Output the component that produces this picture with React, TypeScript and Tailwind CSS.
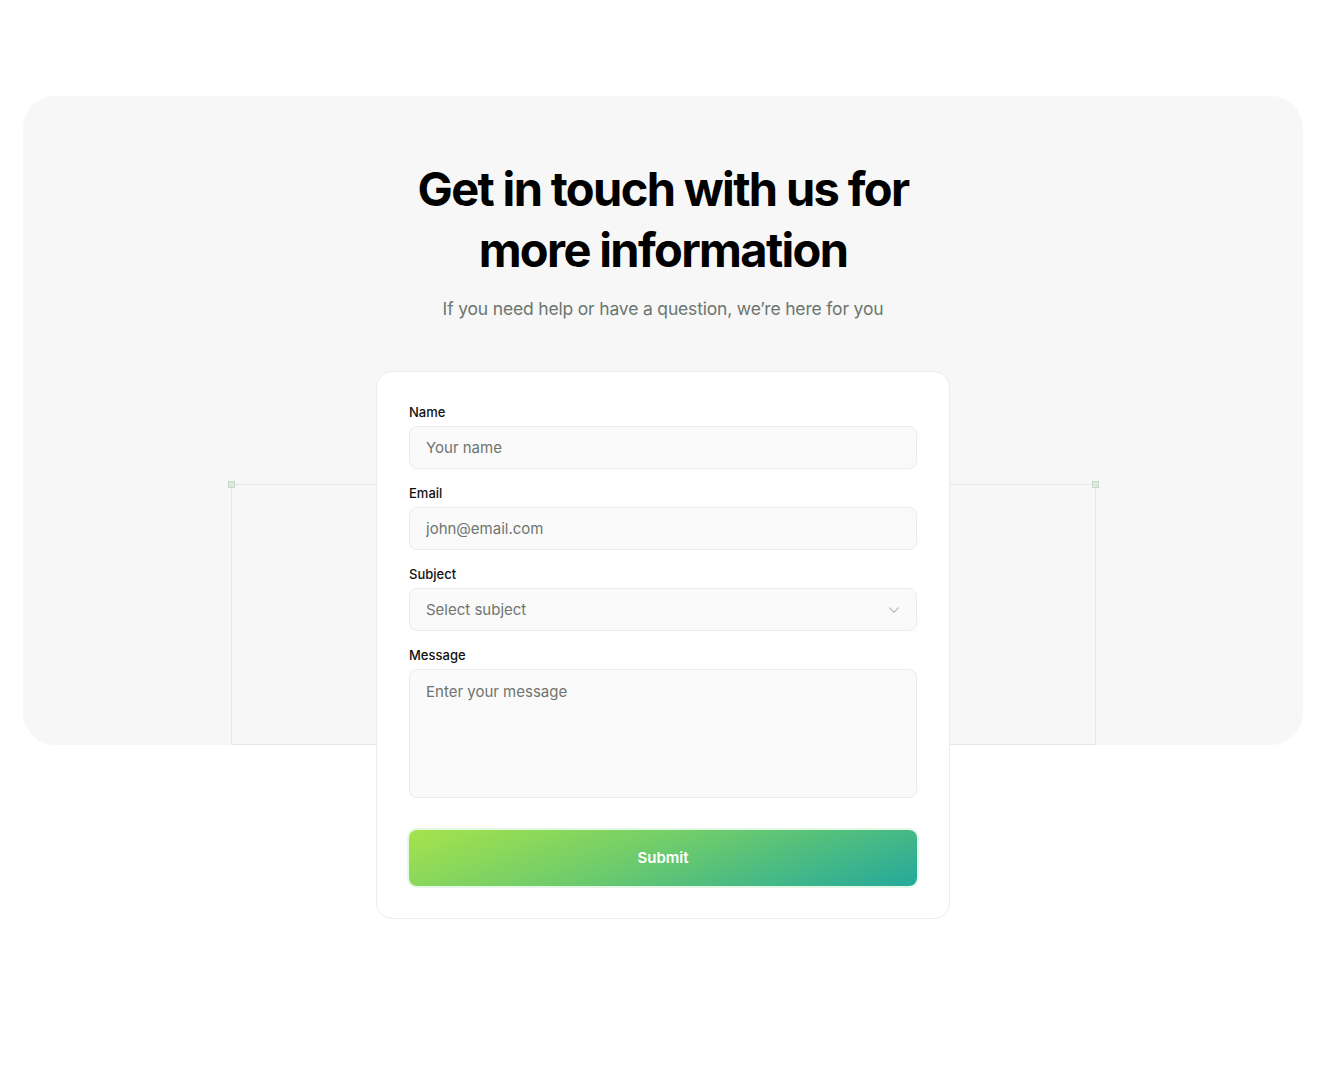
import { ChevronDown } from 'lucide-react';

const font = { fontFamily: 'Inter, "Noto Sans", sans-serif' };

function Field({ label, children }: { label: string; children: React.ReactNode }) {
  return (
    <div className="flex flex-col">
      <label className="text-[13px] font-medium text-[#111] leading-4 mb-[6px]">{label}</label>
      {children}
    </div>
  );
}

const boxCls = 'h-[43px] w-full rounded-lg border border-[#ebebeb] bg-[#fafafa] px-4 text-[15px] outline-none';
const inputCls = boxCls + ' text-[#111] placeholder:text-[#6f7470]';

export default function App() {
  return (
    <div className="min-h-screen bg-white px-[23px] pt-[96px]" style={font}>
      <div className="relative rounded-[32px] bg-[#f7f7f7] pt-[62px]">
        {/* decorative frame behind the form */}
        <div className="absolute left-[208px] right-[207px] top-[388px] bottom-0 border border-[#e6e8e6]">
          <span className="absolute -left-[4px] -top-[4px] h-[7px] w-[7px] border border-[#c5dccb] bg-[#dbeadf]" />
          <span className="absolute -right-[4px] -top-[4px] h-[7px] w-[7px] border border-[#c5dccb] bg-[#dbeadf]" />
        </div>

        <div className="relative flex flex-col items-center">
          <h1 className="text-center text-[47px] font-bold leading-[61px] tracking-[-0.035em] text-black">
            Get in touch with us for
            <br />
            more information
          </h1>
          <p className="mt-[16px] text-[17.5px] text-[#6b766f] tracking-[-0.01em]">
            If you need help or have a question, we’re here for you
          </p>

          <form
            className="mt-[49px] -mb-[174px] flex w-[574px] flex-col rounded-2xl border border-[#ececec] bg-white p-8"
            onSubmit={(e) => e.preventDefault()}
          >
            <div className="flex flex-col gap-[16px]">
              <Field label="Name">
                <input className={inputCls} placeholder="Your name" />
              </Field>
              <Field label="Email">
                <input className={inputCls} placeholder="john@email.com" />
              </Field>
              <Field label="Subject">
                <div className="relative">
                  <div className={boxCls + ' flex items-center text-[#6f7470]'}>Select subject</div>
                  <ChevronDown
                    className="absolute right-[14px] top-1/2 h-[18px] w-[18px] -translate-y-1/2 text-[#a3a8a5]"
                    strokeWidth={1.4}
                  />
                </div>
              </Field>
              <Field label="Message">
                <textarea
                  className="h-[129px] w-full resize-none rounded-lg border border-[#ebebeb] bg-[#fafafa] px-4 py-[11px] text-[15px] text-[#111] placeholder:text-[#6f7470] outline-none"
                  placeholder="Enter your message"
                />
              </Field>
            </div>
            <button
              type="submit"
              className="mt-8 h-[56px] w-full rounded-lg bg-[linear-gradient(160deg,#a6e34b_0%,#6fcc6b_45%,#24a99c_100%)] text-[15px] font-semibold text-white ring-2 ring-[#e4f8e6]"
            >
              Submit
            </button>
          </form>
        </div>
      </div>
    </div>
  );
}
